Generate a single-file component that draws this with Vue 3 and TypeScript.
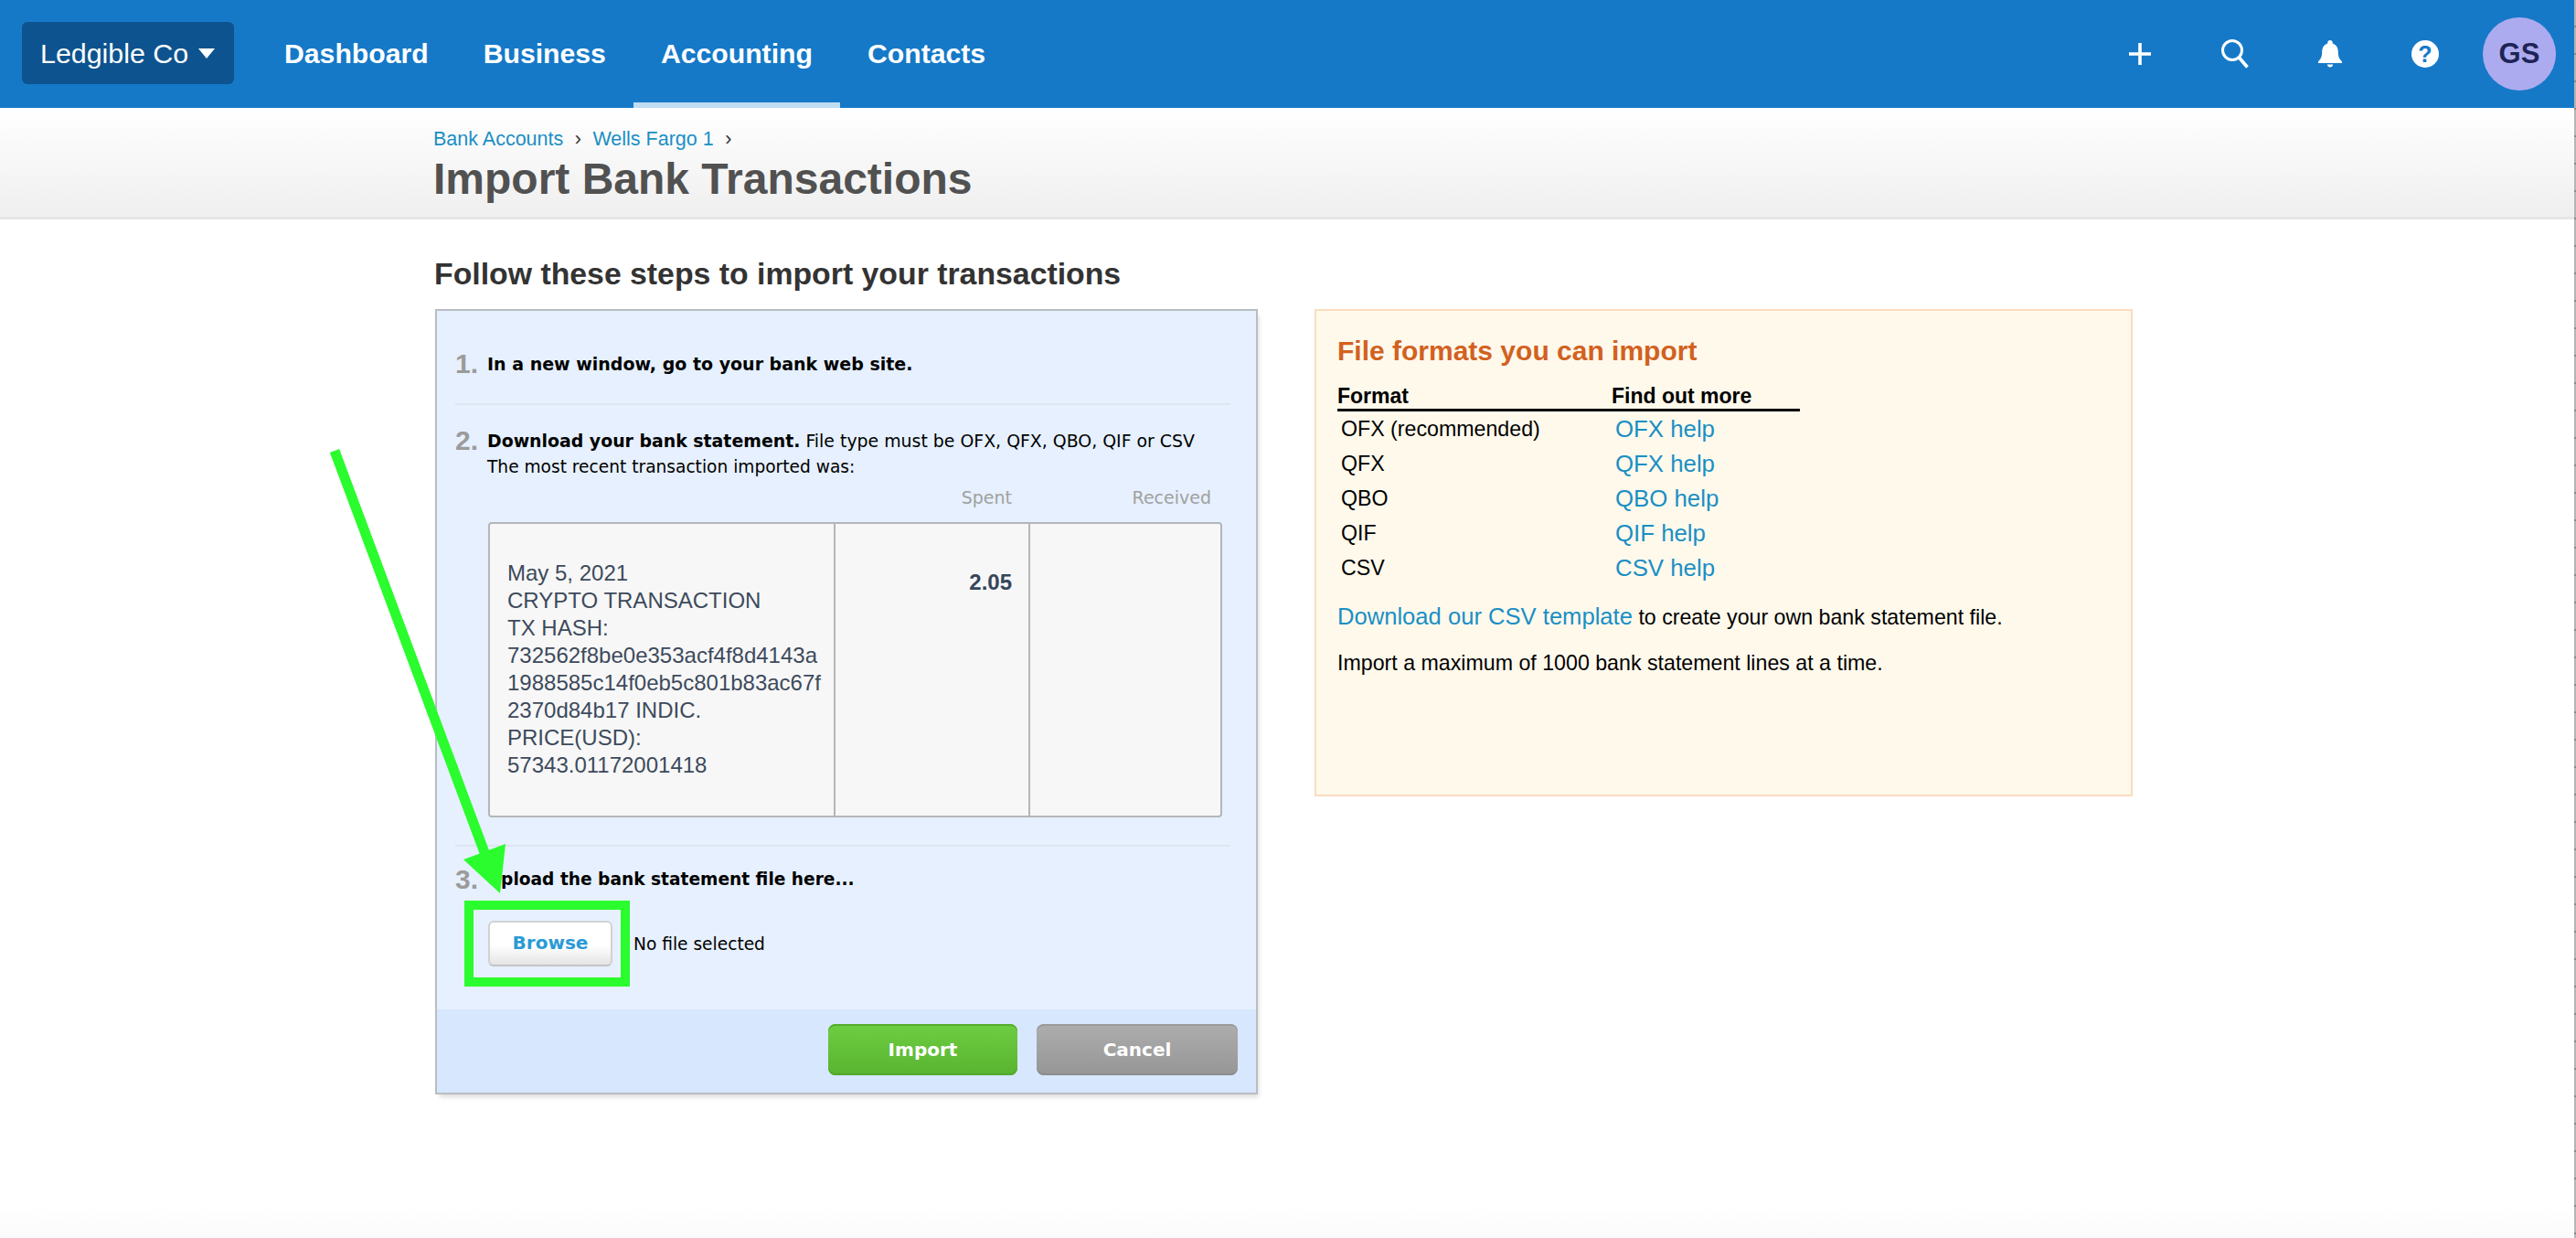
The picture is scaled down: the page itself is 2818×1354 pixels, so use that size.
<script setup lang="ts">
interface Format { name: string; help: string }
const navItems: string[] = ['Dashboard', 'Business', 'Accounting', 'Contacts']
const formats: Format[] = [
  { name: 'OFX (recommended)', help: 'OFX help' },
  { name: 'QFX', help: 'QFX help' },
  { name: 'QBO', help: 'QBO help' },
  { name: 'QIF', help: 'QIF help' },
  { name: 'CSV', help: 'CSV help' }
]
const txLines: string[] = [
  'May 5, 2021',
  'CRYPTO TRANSACTION',
  'TX HASH:',
  '732562f8be0e353acf4f8d4143a',
  '1988585c14f0eb5c801b83ac67f',
  '2370d84b17 INDIC.',
  'PRICE(USD):',
  '57343.01172001418'
]
</script>

<template>
  <div class="page">
    <header class="topbar">
      <div class="company">
        <span>Ledgible Co</span>
        <span class="caret"></span>
      </div>
      <nav class="nav">
        <a v-for="item in navItems" :key="item" class="tab" :class="{ active: item === 'Accounting' }">{{ item }}</a>
      </nav>
      <div class="tools">
        <span class="tool">
          <svg width="24" height="24" viewBox="0 0 24 24"><path d="M12 0v24M0 12h24" stroke="#fff" stroke-width="3.6" fill="none" /></svg>
        </span>
        <span class="tool">
          <svg width="30" height="32" viewBox="0 0 30 32"><circle cx="12" cy="12" r="10.5" stroke="#fff" stroke-width="3" fill="none" /><path d="M19.5 20l9 10.5" stroke="#fff" stroke-width="3.6" fill="none" /></svg>
        </span>
        <span class="tool">
          <svg width="26" height="30" viewBox="0 0 26 30"><path d="M13 0c1.700 0 2.800 1.200 2.800 3v.6C20 5 21.800 8.600 21.800 13c0 5 1.400 7.500 4.200 10.400V25H0v-1.600C2.800 20.500 4.200 18 4.200 13c0-4.400 1.800-8 6-9.400V3C10.200 1.200 11.300 0 13 0z" fill="#fff" /><path d="M9.800 26.500h6.400c-.4 2-1.600 3-3.200 3s-2.800-1-3.200-3z" fill="#fff" /></svg>
        </span>
        <span class="tool">
          <span class="help">?</span>
        </span>
        <span class="avatar">GS</span>
      </div>
    </header>

    <section class="subhead">
      <div class="crumbs">
        <a>Bank Accounts</a><span class="sep">›</span><a>Wells Fargo 1</a><span class="sep">›</span>
      </div>
      <h1>Import Bank Transactions</h1>
    </section>

    <main class="main">
      <h2>Follow these steps to import your transactions</h2>
      <div class="cards">
        <section class="steps-card">
          <div class="steps">
            <div class="step step-one">
              <span class="num">1.</span>
              <div class="step-body"><b>In a new window, go to your bank web site.</b></div>
            </div>
            <div class="step step-two">
              <span class="num">2.</span>
              <div class="step-body">
                <b>Download your bank statement.</b> File type must be OFX, QFX, QBO, QIF or CSV<br />
                <span class="recent">The most recent transaction imported was:</span>
              </div>
            </div>
            <div class="tx-head">
              <span class="tx-spent">Spent</span>
              <span class="tx-received">Received</span>
            </div>
            <div class="tx">
              <div class="tx-desc">
                <div v-for="line in txLines" :key="line">{{ line }}</div>
              </div>
              <div class="tx-amount"><b>2.05</b></div>
              <div class="tx-empty"></div>
            </div>
            <div class="step step-three">
              <span class="num">3.</span>
              <div class="step-body"><b>Upload the bank statement file here...</b></div>
            </div>
            <div class="file-row">
              <button class="browse">Browse</button>
              <span class="no-file">No file selected</span>
            </div>
          </div>
          <footer class="actions">
            <button class="btn btn-import">Import</button>
            <button class="btn btn-cancel">Cancel</button>
          </footer>
        </section>

        <aside class="info-card">
          <h3>File formats you can import</h3>
          <div class="fmt-head">
            <span>Format</span>
            <span>Find out more</span>
          </div>
          <div v-for="f in formats" :key="f.name" class="fmt-row">
            <span>{{ f.name }}</span>
            <a>{{ f.help }}</a>
          </div>
          <p class="download"><a>Download our CSV template</a> to create your own bank statement file.</p>
          <p class="limit">Import a maximum of 1000 bank statement lines at a time.</p>
        </aside>
      </div>
    </main>

    <svg class="annotation" width="2818" height="1354" viewBox="0 0 2818 1354">
      <path d="M366 493L531 935" stroke="#2afc2e" stroke-width="11" fill="none" />
      <path d="M553 923L507 940L547 977z" fill="#2afc2e" />
      <rect x="513" y="990" width="171" height="84" stroke="#2afc2e" stroke-width="10" fill="none" />
    </svg>
    <div class="edge"></div>
  </div>
</template>

<style scoped>
.page {
  position: relative;
  width: 2818px;
  height: 1354px;
  overflow: hidden;
  background: linear-gradient(#fff calc(100% - 36px), #fafafa);
  font-family: "Liberation Sans", Arial, sans-serif;
  color: #000;
}
.topbar {
  display: flex;
  align-items: center;
  width: 2816px;
  height: 118px;
  padding-left: 24px;
  box-sizing: border-box;
  background: #1579c8;
  color: #fff;
}
.company {
  display: flex;
  align-items: center;
  box-sizing: border-box;
  width: 232px;
  height: 68px;
  margin-bottom: 2px;
  padding-left: 20px;
  border-radius: 6px;
  background: #0d538f;
  font-size: 30.4px;
}
.caret {
  margin-left: 11px;
  border-left: 9px solid transparent;
  border-right: 9px solid transparent;
  border-top: 11px solid #fff;
}
.nav {
  display: flex;
  height: 118px;
  margin-left: 25px;
}
.tab {
  display: flex;
  align-items: center;
  box-sizing: border-box;
  height: 118px;
  padding: 0 30px;
  border-bottom: 6px solid transparent;
  border-top: 6px solid transparent;
  color: #fff;
  font-size: 30.2px;
  font-weight: bold;
}
.tab.active {
  border-bottom-color: #bfddf3;
}
.tools {
  display: flex;
  align-items: center;
  margin-left: auto;
  padding-right: 20px;
}
.tool {
  display: flex;
  align-items: center;
  justify-content: center;
  width: 104px;
  height: 60px;
}
.help {
  display: block;
  width: 30px;
  height: 30px;
  border-radius: 50%;
  background: #fff;
  color: #1579c8;
  font-size: 25px;
  font-weight: bold;
  line-height: 30px;
  text-align: center;
}
.avatar {
  display: block;
  width: 80px;
  height: 80px;
  margin-left: 11px;
  border-radius: 50%;
  background: #adabef;
  color: #1e2456;
  font-size: 31px;
  font-weight: bold;
  line-height: 80px;
  text-align: center;
}
.subhead {
  box-sizing: border-box;
  height: 122px;
  padding: 21px 0 0 474px;
  border-bottom: 3px solid #e6e6e6;
  background: linear-gradient(#fff, #efefef);
}
.crumbs {
  height: 26px;
  font-size: 21.5px;
  line-height: 26px;
}
a {
  color: #1a8fc4;
}
.sep {
  margin: 0 12.500px;
  color: #333;
}
h1 {
  margin: 3px 0 0;
  color: #515151;
  font-size: 48px;
  line-height: 56px;
  font-weight: bold;
}
.main {
  padding: 39px 0 0 475px;
}
h2 {
  margin: 0;
  color: #333;
  font-size: 33.8px;
  line-height: 40px;
  font-weight: bold;
}
.cards {
  display: flex;
  align-items: flex-start;
  margin: 19px 0 0 1px;
}
.steps-card {
  box-sizing: border-box;
  flex: none;
  width: 900px;
  height: 859px;
  display: flex;
  flex-direction: column;
  border: 2px solid #b9bdc3;
  background: #e6f0fe;
  box-shadow: 3px 5px 5px -2px rgba(0, 0, 0, 0.14);
}
.steps {
  flex: 1;
  padding: 0 28px 0 20px;
  font-family: "DejaVu Sans", Verdana, sans-serif;
  font-size: 19px;
  line-height: 28px;
}
.step {
  display: flex;
}
.step-one {
  height: 103px;
  padding-top: 44px;
  box-sizing: border-box;
  border-bottom: 2px solid #dde6f0;
}
.step-two {
  margin-top: 25px;
  font-size: 18.9px;
}
.recent {
  font-size: 18.6px;
}
.step-three {
  margin-top: 30px;
  padding-top: 22px;
  border-top: 2px solid #dde6f0;
  font-size: 18.6px;
}
.num {
  flex: none;
  width: 35px;
  color: #9b9b9b;
  font-family: "Liberation Sans", Arial, sans-serif;
  font-size: 30px;
  font-weight: bold;
  line-height: 28px;
}
.step-body b {
  font-weight: bold;
}
.tx-head {
  display: flex;
  height: 43px;
  margin-top: 3px;
  color: #a0a0a0;
  line-height: 32px;
}
.tx-spent {
  width: 609px;
  text-align: right;
}
.tx-received {
  width: 218px;
  text-align: right;
}
.tx {
  display: flex;
  box-sizing: border-box;
  width: 803px;
  height: 323px;
  margin-left: 36px;
  border: 2px solid #b4b6b8;
  border-radius: 4px;
  background: #f7f7f7;
  color: #3d4a5c;
  font-family: "Liberation Sans", Arial, sans-serif;
  font-size: 24px;
  line-height: 30px;
}
.tx-desc {
  box-sizing: border-box;
  width: 376px;
  padding: 39px 0 0 19px;
  white-space: nowrap;
}
.tx-amount {
  box-sizing: border-box;
  width: 213px;
  padding: 49px 18px 0 0;
  border-left: 2px solid #b4b6b8;
  color: #34465a;
  text-align: right;
}
.tx-empty {
  flex: 1;
  border-left: 2px solid #b4b6b8;
}
.file-row {
  display: flex;
  align-items: center;
  margin: 31px 0 0 36px;
}
.browse {
  width: 136px;
  height: 50px;
  padding: 0 0 2px;
  border: 2px solid #d2d2d2;
  border-bottom-color: #c4c4c4;
  border-radius: 6px;
  background: linear-gradient(#fff 55%, #e4e4e4);
  color: #2a9ad6;
  font-family: "DejaVu Sans", Verdana, sans-serif;
  font-size: 20px;
  font-weight: bold;
}
.no-file {
  margin: 2px 0 0 23px;
  font-size: 18.6px;
}
.actions {
  display: flex;
  justify-content: flex-end;
  gap: 21px;
  height: 91px;
  box-sizing: border-box;
  padding: 16px 20px 0 0;
  background: #d7e7fd;
}
.btn {
  height: 56px;
  padding: 0;
  border: 0;
  border-radius: 8px;
  color: #fff;
  font-family: "DejaVu Sans", Verdana, sans-serif;
  font-size: 20px;
  font-weight: bold;
}
.btn-import {
  width: 207px;
  background: linear-gradient(#6dce42, #59b32f);
  box-shadow: inset 0 2px 0 #55ad2c, inset 0 -2px 0 #52a82b;
}
.btn-cancel {
  width: 220px;
  background: linear-gradient(#adadad, #969696);
  box-shadow: inset 0 2px 0 #9a9a9a, inset 0 -2px 0 #8c8c8c;
}
.info-card {
  box-sizing: border-box;
  flex: none;
  width: 895px;
  height: 533px;
  margin-left: 62px;
  padding: 26px 0 0 23px;
  border: 2px solid #fbdcc0;
  background: #fff9ec;
  font-size: 23.2px;
}
h3 {
  margin: 0;
  color: #d2611f;
  font-size: 30px;
  line-height: 36px;
  font-weight: bold;
}
.fmt-head {
  display: grid;
  grid-template-columns: 300px 206px;
  width: 506px;
  margin-top: 18px;
  border-bottom: 3px solid #000;
  font-size: 23px;
  font-weight: bold;
  line-height: 27px;
}
.fmt-row {
  display: grid;
  grid-template-columns: 300px 206px;
  width: 506px;
  padding-left: 4px;
  line-height: 38px;
}
.fmt-row a {
  font-size: 25.8px;
}
.download {
  margin: 15px 0 0;
  line-height: 38px;
}
.download a {
  font-size: 25.6px;
}
.limit {
  margin: 13px 0 0;
  line-height: 36px;
}
.annotation {
  position: absolute;
  top: 0;
  left: 0;
  pointer-events: none;
}
.edge {
  position: absolute;
  top: 0;
  right: 0;
  bottom: 0;
  width: 2px;
  background: repeating-linear-gradient(#b5b5b5 0 28px, #8a8a8a 28px 30px);
}
</style>
